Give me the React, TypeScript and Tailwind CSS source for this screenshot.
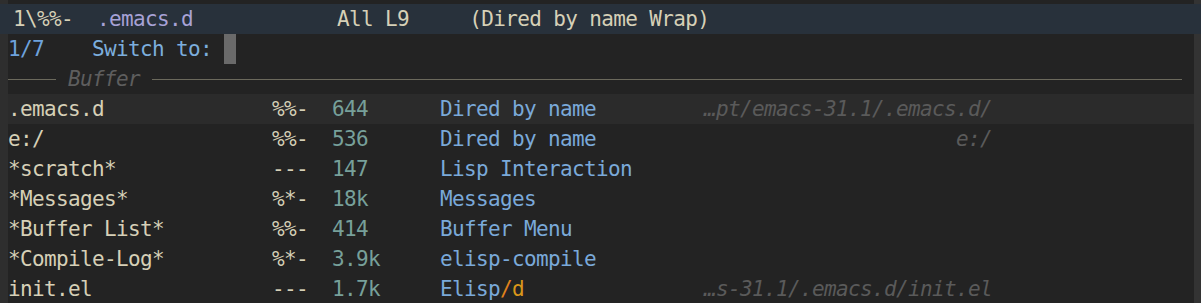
const rows = [
  { name: ".emacs.d", flags: "%%-", size: "644", mode: "Dired by name", path: "…pt/emacs-31.1/.emacs.d/", current: true },
  { name: "e:/", flags: "%%-", size: "536", mode: "Dired by name", path: "e:/" },
  { name: "*scratch*", flags: "---", size: "147", mode: "Lisp Interaction", path: "" },
  { name: "*Messages*", flags: "%*-", size: "18k", mode: "Messages", path: "" },
  { name: "*Buffer List*", flags: "%%-", size: "414", mode: "Buffer Menu", path: "" },
  { name: "*Compile-Log*", flags: "%*-", size: "3.9k", mode: "elisp-compile", path: "" },
  { name: "init.el", flags: "---", size: "1.7k", mode: "Elisp", path: "…s-31.1/.emacs.d/init.el", vc: "/d" },
];

const mono = "font-['DejaVu_Sans_Mono',monospace] text-[21px] tracking-[-0.64px] whitespace-pre";

export default function App() {
  return (
    <div className={`w-[1201px] h-[303px] overflow-hidden bg-[#232323] text-[#d6d0b7] ${mono}`}>
      <div className="flex h-[4px]">
        <div className="w-2 bg-[#2e2e2e]" />
        <div className="flex-1" />
        <div className="w-[7px] bg-[#333333]" />
      </div>

      {/* mode line */}
      <div className="flex h-[30px] items-center bg-[#28313b] pl-[1px] leading-[30px]">
        <span> 1\%%-  </span>
        <span className="text-[#a7a2d6]">.emacs.d</span>
        <span>            All L9     (Dired by name Wrap)</span>
      </div>

      <div className="flex">
        <div className="w-2 bg-[#2e2e2e]" />
        <div className="flex-1 leading-[30px]">
          {/* minibuffer */}
          <div className="flex h-[30px] items-center">
            <span className="w-[84px] text-[#6ea2dc]">1/7</span>
            <span className="text-[#7caedd]">Switch to: </span>
            <span className="h-[30px] w-3 bg-[#6a6a6a]" />
          </div>

          {/* header */}
          <div className="flex h-[30px] items-center">
            <div className="h-px w-[48px] bg-[#6b695c]" />
            <span className="w-[12px]" />
            <span className="italic text-[#5e5e5e]">Buffer</span>
            <span className="w-[12px]" />
            <div className="mr-[12px] h-px flex-1 bg-[#6b695c]" />
          </div>

          {rows.map((r) => (
            <div key={r.name} className={`flex h-[30px] items-center ${r.current ? "bg-[#2b2b2b]" : ""}`}>
              <span className="w-[264px]">{r.name}</span>
              <span className="w-[60px]">{r.flags}</span>
              <span className="w-[108px] text-[#77a09a]">{r.size}</span>
              <span className="w-[264px] text-[#7aa9d9]">
                {r.mode}
                {r.vc && (
                  <>
                    <span className="text-[#e0821c]">/</span>
                    <span className="text-[#d9971a]">d</span>
                  </>
                )}
              </span>
              <span className="w-[288px] text-right italic text-[#5a5a5a]">{r.path}</span>
            </div>
          ))}
        </div>
        <div className="w-[7px] bg-[#333333]" />
      </div>
    </div>
  );
}
